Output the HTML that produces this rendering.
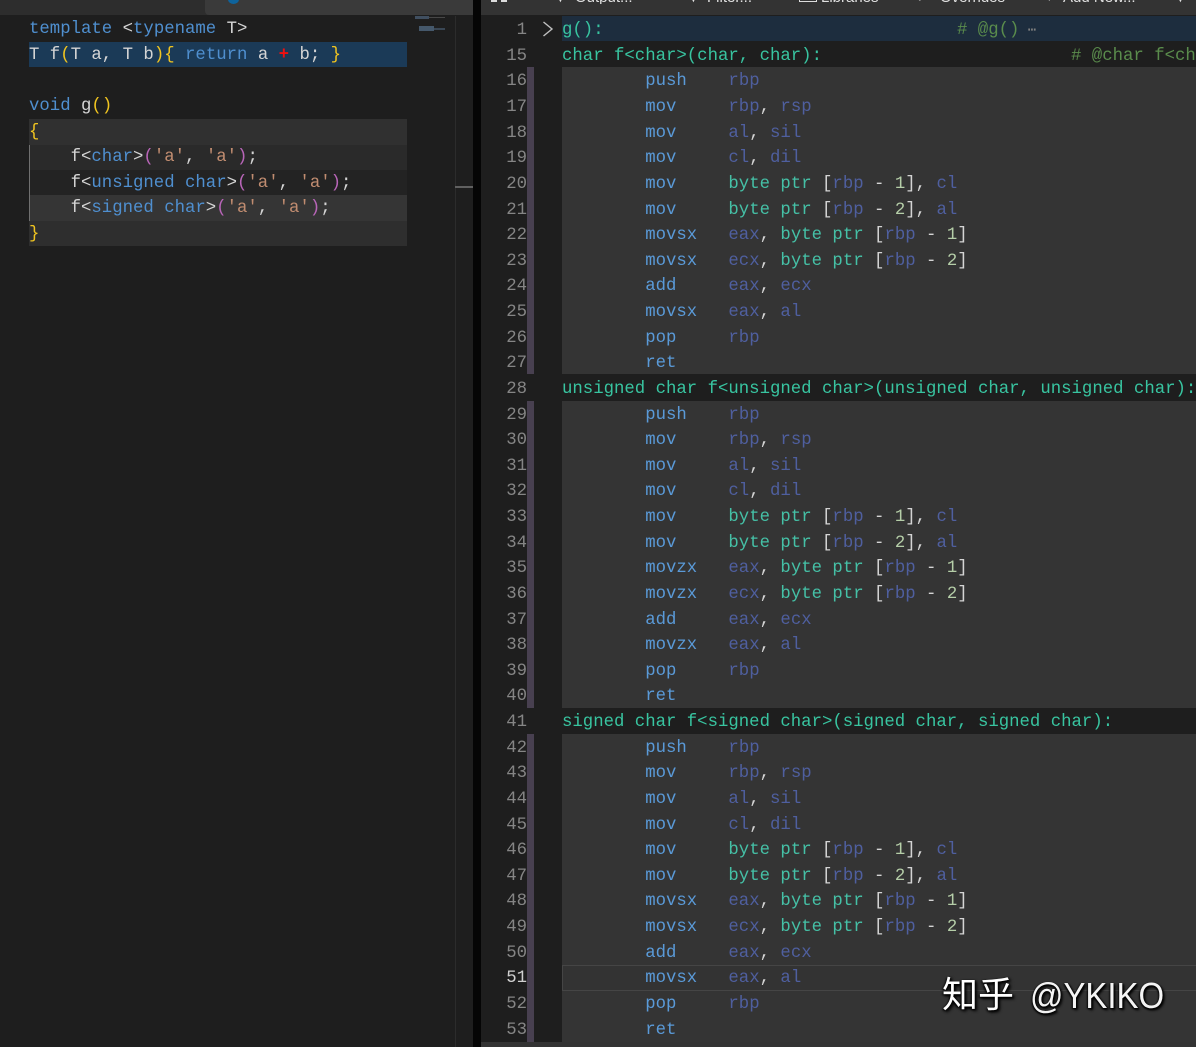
<!DOCTYPE html>
<html><head><meta charset="utf-8">
<style>
html,body{margin:0;padding:0;background:#1e1e1e}
#w{position:relative;width:1196px;height:1047px;overflow:hidden;background:#1e1e1e;font-family:"Liberation Mono",monospace;font-size:17.33px;color:#d4d4d4}
.b{position:absolute}
pre{position:absolute;margin:0;font:inherit;line-height:25.63px;white-space:pre}
.k{color:#4f8fcf}.m{color:#5a9ad8}.r{color:#4f5f9f}.t{color:#45c0a6}.c{color:#5a8c4c}.n{color:#b5cea8}.y{color:#f0c420}.p{color:#b865b8}.s{color:#c08c70}.g{color:#38c4a0}
</style></head><body><div id="w">
<div class="b" style="left:0;top:0;width:473px;height:15px;background:#2d2d2d"></div>
<div class="b" style="left:205px;top:0;width:268px;height:15px;background:#3a3a3a;border-radius:0 0 0 4px"></div>
<div class="b" style="left:228px;top:-5px;width:11px;height:9px;border-radius:50%;background:#0e639c"></div>
<div class="b" style="left:473px;top:0;width:8px;height:1047px;background:#050505"></div>
<div class="b" style="left:481px;top:0;width:715px;height:15px;background:#333"></div>
<div class="b" style="left:481px;top:1042px;width:715px;height:5px;background:#333"></div>
<div class="b" style="left:455px;top:16px;width:1px;height:1031px;background:#2c2c2c"></div>
<div class="b" style="left:455px;top:186px;width:18px;height:2px;background:#606060"></div>

<div class="b" style="left:29px;top:42px;width:378px;height:25px;background:#1b3a57"></div>
<div class="b" style="left:29px;top:119px;width:378px;height:26px;background:#303030"></div>
<div class="b" style="left:29px;top:145px;width:378px;height:25px;background:#2a2a2a"></div>
<div class="b" style="left:29px;top:170px;width:378px;height:25px;background:#232323"></div>
<div class="b" style="left:29px;top:195px;width:378px;height:26px;background:#353535"></div>
<div class="b" style="left:29px;top:221px;width:378px;height:25px;background:#2e2e2e"></div>
<div class="b" style="left:29px;top:145px;width:1px;height:76px;background:#707070"></div>
<div class="b" style="left:415px;top:16px;width:14px;height:3px;background:#56708c;opacity:.6"></div>
<div class="b" style="left:429px;top:17px;width:16px;height:1px;background:#707070;opacity:.5"></div>
<div class="b" style="left:419px;top:26px;width:15px;height:5px;background:#56708c;opacity:.7"></div>
<div class="b" style="left:434px;top:28px;width:11px;height:2px;background:#56708c;opacity:.5"></div>

<pre style="left:29px;top:17px"><span class="k">template</span> &lt;<span class="k">typename</span> T&gt;
T f<span class="y">(</span>T a, T b<span class="y">)</span><span class="y">{</span> <span class="k">return</span> a <span style="color:#f01010;font-weight:bold">+</span> b; <span class="y">}</span>

<span class="k">void</span> g<span class="y">()</span>
<span class="y">{</span>
    f&lt;<span class="k">char</span>&gt;<span class="p">(</span><span class="s">'a'</span>, <span class="s">'a'</span><span class="p">)</span>;
    f&lt;<span class="k">unsigned char</span>&gt;<span class="p">(</span><span class="s">'a'</span>, <span class="s">'a'</span><span class="p">)</span>;
    f&lt;<span class="k">signed char</span>&gt;<span class="p">(</span><span class="s">'a'</span>, <span class="s">'a'</span><span class="p">)</span>;
<span class="y">}</span></pre>

<div class="b" style="left:562px;top:16px;width:634px;height:25px;background:#1d2d3e"></div>
<div class="b" style="left:562px;top:67px;width:634px;height:307px;background:#343434"></div>
<div class="b" style="left:562px;top:401px;width:634px;height:307px;background:#343434"></div>
<div class="b" style="left:562px;top:734px;width:634px;height:308px;background:#343434"></div>
<div class="b" style="left:527px;top:67px;width:7px;height:307px;background:#484050"></div>
<div class="b" style="left:527px;top:401px;width:7px;height:307px;background:#484050"></div>
<div class="b" style="left:527px;top:734px;width:7px;height:308px;background:#484050"></div>
<div class="b" style="left:562px;top:965px;width:634px;height:24px;border:1px solid #454545;background:#333"></div>

<pre style="left:481px;width:46px;top:18.2px;text-align:right;color:#858585">1
15
16
17
18
19
20
21
22
23
24
25
26
27
28
29
30
31
32
33
34
35
36
37
38
39
40
41
42
43
44
45
46
47
48
49
50
<span style="color:#d0d0d0">51</span>
52
53</pre>
<svg class="b" style="left:541px;top:20px" width="14" height="18" viewBox="0 0 14 18"><path d="M2.5 2 L11 9 L2.5 16" fill="none" stroke="#c0c0c0" stroke-width="1.4"/></svg>

<pre style="left:562px;top:18.2px"><span class="g">g():</span>
<span class="g">char f&lt;char&gt;(char, char):</span>
        <span class="m">push</span>    <span class="r">rbp</span>
        <span class="m">mov</span>     <span class="r">rbp</span>, <span class="r">rsp</span>
        <span class="m">mov</span>     <span class="r">al</span>, <span class="r">sil</span>
        <span class="m">mov</span>     <span class="r">cl</span>, <span class="r">dil</span>
        <span class="m">mov</span>     <span class="t">byte ptr</span> [<span class="r">rbp</span> - <span class="n">1</span>], <span class="r">cl</span>
        <span class="m">mov</span>     <span class="t">byte ptr</span> [<span class="r">rbp</span> - <span class="n">2</span>], <span class="r">al</span>
        <span class="m">movsx</span>   <span class="r">eax</span>, <span class="t">byte ptr</span> [<span class="r">rbp</span> - <span class="n">1</span>]
        <span class="m">movsx</span>   <span class="r">ecx</span>, <span class="t">byte ptr</span> [<span class="r">rbp</span> - <span class="n">2</span>]
        <span class="m">add</span>     <span class="r">eax</span>, <span class="r">ecx</span>
        <span class="m">movsx</span>   <span class="r">eax</span>, <span class="r">al</span>
        <span class="m">pop</span>     <span class="r">rbp</span>
        <span class="m">ret</span>
<span class="g">unsigned char f&lt;unsigned char&gt;(unsigned char, unsigned char):</span>
        <span class="m">push</span>    <span class="r">rbp</span>
        <span class="m">mov</span>     <span class="r">rbp</span>, <span class="r">rsp</span>
        <span class="m">mov</span>     <span class="r">al</span>, <span class="r">sil</span>
        <span class="m">mov</span>     <span class="r">cl</span>, <span class="r">dil</span>
        <span class="m">mov</span>     <span class="t">byte ptr</span> [<span class="r">rbp</span> - <span class="n">1</span>], <span class="r">cl</span>
        <span class="m">mov</span>     <span class="t">byte ptr</span> [<span class="r">rbp</span> - <span class="n">2</span>], <span class="r">al</span>
        <span class="m">movzx</span>   <span class="r">eax</span>, <span class="t">byte ptr</span> [<span class="r">rbp</span> - <span class="n">1</span>]
        <span class="m">movzx</span>   <span class="r">ecx</span>, <span class="t">byte ptr</span> [<span class="r">rbp</span> - <span class="n">2</span>]
        <span class="m">add</span>     <span class="r">eax</span>, <span class="r">ecx</span>
        <span class="m">movzx</span>   <span class="r">eax</span>, <span class="r">al</span>
        <span class="m">pop</span>     <span class="r">rbp</span>
        <span class="m">ret</span>
<span class="g">signed char f&lt;signed char&gt;(signed char, signed char):</span>
        <span class="m">push</span>    <span class="r">rbp</span>
        <span class="m">mov</span>     <span class="r">rbp</span>, <span class="r">rsp</span>
        <span class="m">mov</span>     <span class="r">al</span>, <span class="r">sil</span>
        <span class="m">mov</span>     <span class="r">cl</span>, <span class="r">dil</span>
        <span class="m">mov</span>     <span class="t">byte ptr</span> [<span class="r">rbp</span> - <span class="n">1</span>], <span class="r">cl</span>
        <span class="m">mov</span>     <span class="t">byte ptr</span> [<span class="r">rbp</span> - <span class="n">2</span>], <span class="r">al</span>
        <span class="m">movsx</span>   <span class="r">eax</span>, <span class="t">byte ptr</span> [<span class="r">rbp</span> - <span class="n">1</span>]
        <span class="m">movsx</span>   <span class="r">ecx</span>, <span class="t">byte ptr</span> [<span class="r">rbp</span> - <span class="n">2</span>]
        <span class="m">add</span>     <span class="r">eax</span>, <span class="r">ecx</span>
        <span class="m">movsx</span>   <span class="r">eax</span>, <span class="r">al</span>
        <span class="m">pop</span>     <span class="r">rbp</span>
        <span class="m">ret</span></pre>

<pre style="left:957px;top:18.2px"><span class="c"># @g()</span><span style="color:#808080;font-size:14px"> ⋯</span></pre>
<pre style="left:1071px;top:43.8px"><span class="c"># @char f&lt;char&gt;(char, char)</span></pre>

<div style="position:absolute;left:481px;top:-10px;width:715px;height:14px;overflow:hidden;font:15px/15px 'Liberation Sans',sans-serif;color:#e0e0e0">
<span class="b" style="left:10px;top:6px;width:6px;height:6px;background:#ddd"></span>
<span class="b" style="left:20px;top:6px;width:6px;height:6px;background:#ddd"></span>
<span class="b" style="left:72px;top:0">▼</span><span class="b" style="left:94px;top:0">Output...</span>
<span class="b" style="left:205px;top:0">▼</span><span class="b" style="left:226px;top:0">Filter...</span>
<span class="b" style="left:318px;top:4px;width:16px;height:6px;border:1px solid #ddd"></span><span class="b" style="left:340px;top:0">Libraries</span>
<span class="b" style="left:435px;top:0">✓</span><span class="b" style="left:459px;top:0">Overrides</span>
<span class="b" style="left:564px;top:0">+</span><span class="b" style="left:582px;top:0">Add New...</span>
<span class="b" style="left:692px;top:0">▼</span>
</div>

<div class="b" style="left:942px;top:973px;white-space:nowrap;font:36px/44px 'Liberation Sans','Noto Sans CJK SC',sans-serif;color:#fff;text-shadow:1px 1px 2px #000,-1px 1px 2px #000,2px 2px 3px #000">知乎</div>
<div class="b" style="left:1030px;top:974px;white-space:nowrap;font:36px/44px 'Liberation Sans',sans-serif;color:#f4f4f4;transform:scaleX(.915);transform-origin:0 0;text-shadow:1px 1px 2px #000,-1px 1px 2px #000,2px 2px 3px #000">@YKIKO</div>
</div></body></html>
